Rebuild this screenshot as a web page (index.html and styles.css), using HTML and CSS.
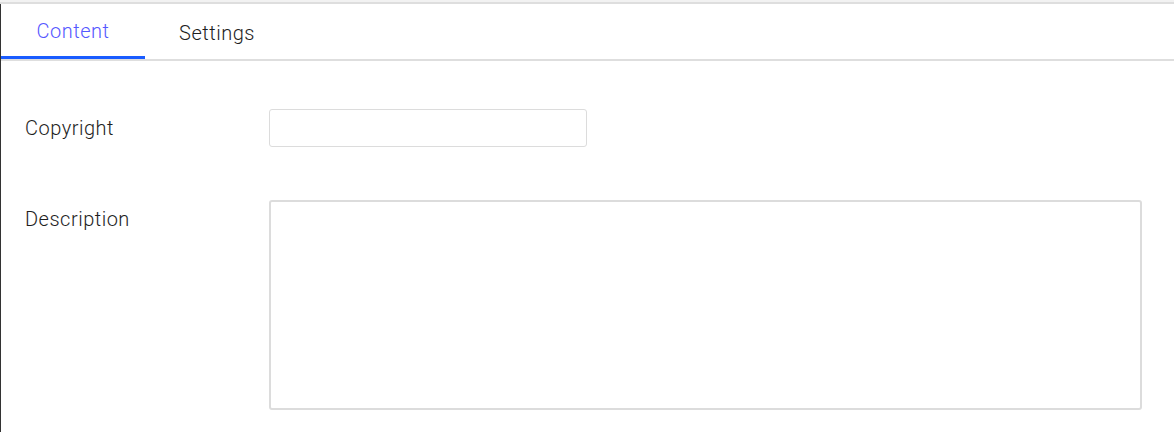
FILE: index.html
```html
<!DOCTYPE html>
<html>
<head>
<meta charset="utf-8">
<link rel="stylesheet" href="styles.css">
</head>
<body>
<div class="topbar"></div>
<div class="panel">
  <div class="tabs">
    <div class="tab active">Content</div>
    <div class="tab">Settings</div>
  </div>
  <div class="form">
    <div class="row">
      <label class="label">Copyright</label>
      <input class="input" type="text">
    </div>
    <div class="row">
      <label class="label">Description</label>
      <textarea class="textarea"></textarea>
    </div>
  </div>
</div>
</body>
</html>
```

FILE: styles.css
```css
html, body {
  margin: 0;
  padding: 0;
  background: #fff;
}
body {
  font-family: Roboto, "Liberation Sans", sans-serif;
  color: #222;
  overflow: hidden;
  height: 432px;
}
.topbar {
  height: 2px;
  background: #f2f2f2;
  border-bottom: 2px solid #dedede;
}
.panel {
  border-left: 1px solid #333;
  height: 428px;
}
.tabs {
  display: flex;
  border-bottom: 2px solid #dedede;
  height: 55px;
}
.tab {
  width: 144px;
  text-align: center;
  font-size: 20px;
  font-weight: 300;
  letter-spacing: 0.5px;
  padding-top: 3px;
  line-height: 52px;
  color: #1e1e1e;
  box-sizing: border-box;
}
.tab.active {
  color: #5558ff;
  border-bottom: 3px solid #1a5cff;
  line-height: 49px;
}
.form {
  padding: 48px 32px 0 24px;
}
.row {
  display: flex;
  align-items: flex-start;
}
.row + .row {
  margin-top: 53px;
}
.label {
  width: 244px;
  font-size: 20px;
  font-weight: 300;
  letter-spacing: 0.5px;
  line-height: 38px;
  color: #1e1e1e;
}
.input {
  width: 318px;
  height: 38px;
  box-sizing: border-box;
  border: 1px solid #dcdcdc;
  border-radius: 3px;
  margin: 0;
  padding: 0 10px;
}
.textarea {
  width: 873px;
  height: 210px;
  box-sizing: border-box;
  border: 2px solid #dcdcdc;
  border-radius: 3px;
  margin: 0;
  resize: none;
}
```
